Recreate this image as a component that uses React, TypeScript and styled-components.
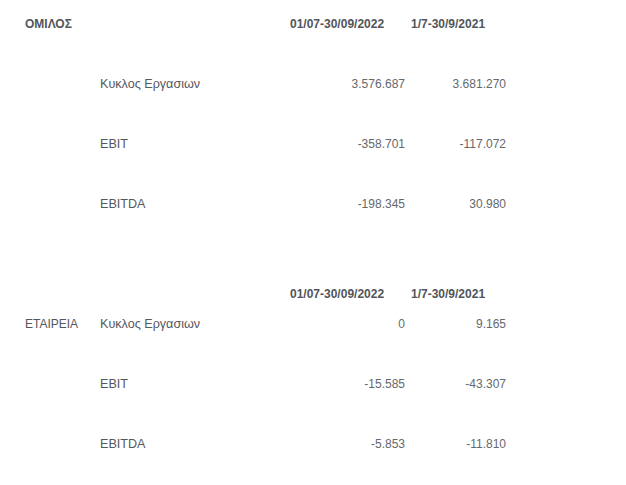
import React from "react";
import styled, { createGlobalStyle } from "styled-components";

const Global = createGlobalStyle`
  body {
    margin: 8px;
    background: #ffffff;
    font-family: "Liberation Sans", Arial, sans-serif;
    font-size: 12px;
  }
`;

const Table = styled.div`
  display: grid;
  grid-template-columns: 75px 190px 116px 100px;
  grid-auto-rows: 30px;
  margin-left: 17px;
  padding-top: 1px;
  line-height: 30px;
`;

const Group = styled.span<{ $bold?: boolean }>`
  color: #53565b;
  font-weight: ${(p) => (p.$bold ? 700 : 400)};
  white-space: nowrap;
`;

const Label = styled.span`
  color: #55585d;
  font-size: 12.6px;
  white-space: nowrap;
`;

const Period = styled.span<{ $indent?: number }>`
  color: #52555a;
  font-weight: 700;
  white-space: nowrap;
  padding-left: ${(p) => p.$indent ?? 0}px;
`;

const Num = styled.span<{ $pad?: number }>`
  color: #65686c;
  text-align: right;
  white-space: nowrap;
  padding-right: ${(p) => p.$pad ?? 0}px;
`;

const Blank = styled.div`
  grid-column: 1 / -1;
`;

type Row = { group?: string; groupBold?: boolean; label?: string; a?: string; b?: string; header?: boolean; blank?: boolean };

const rows: Row[] = [
  { group: "ΟΜΙΛΟΣ", groupBold: true, header: true },
  { blank: true },
  { label: "Κυκλος Εργασιων", a: "3.576.687", b: "3.681.270" },
  { blank: true },
  { label: "EBIT", a: "-358.701", b: "-117.072" },
  { blank: true },
  { label: "EBITDA", a: "-198.345", b: "30.980" },
  { blank: true },
  { blank: true },
  { header: true },
  { group: "ΕΤΑΙΡΕΙΑ", label: "Κυκλος Εργασιων", a: "0", b: "9.165" },
  { blank: true },
  { label: "EBIT", a: "-15.585", b: "-43.307" },
  { blank: true },
  { label: "EBITDA", a: "-5.853", b: "-11.810" },
];

export default function App() {
  return (
    <>
      <Global />
      <Table>
        {rows.map((r, i) =>
          r.blank ? (
            <Blank key={i} />
          ) : r.header ? (
            <React.Fragment key={i}>
              <Group $bold={r.groupBold}>{r.group ?? ""}</Group>
              <Label />
              <Period>01/07-30/09/2022</Period>
              <Period $indent={5}>1/7-30/9/2021</Period>
            </React.Fragment>
          ) : (
            <React.Fragment key={i}>
              <Group $bold={r.groupBold}>{r.group ?? ""}</Group>
              <Label>{r.label}</Label>
              <Num $pad={1}>{r.a}</Num>
              <Num>{r.b}</Num>
            </React.Fragment>
          )
        )}
      </Table>
    </>
  );
}
